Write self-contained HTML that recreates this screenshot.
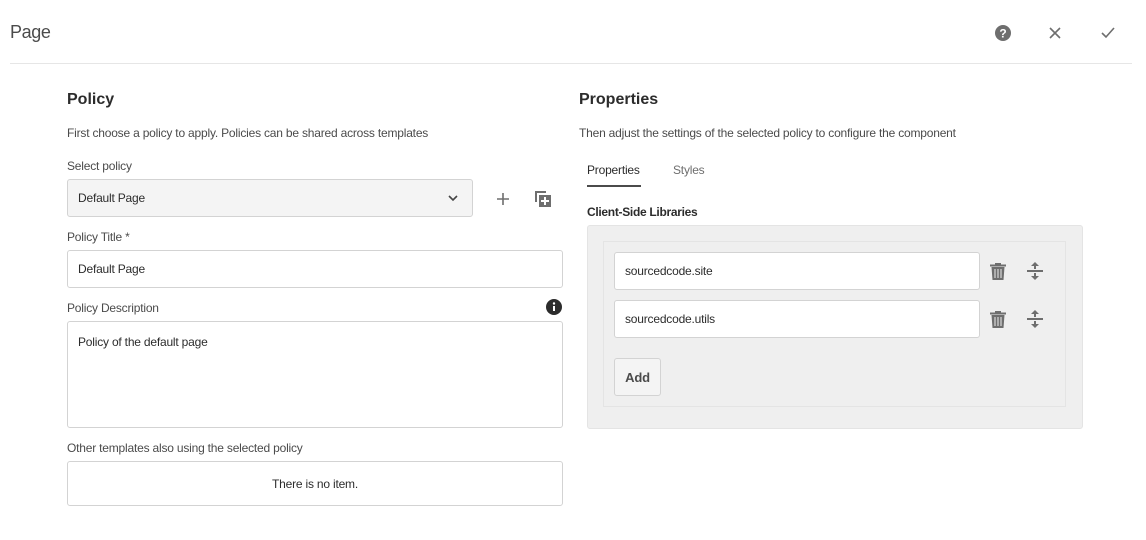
<!DOCTYPE html>
<html><head><style>
*{box-sizing:border-box;margin:0;padding:0}
body{width:1146px;height:540px;background:#fff;font-family:"Liberation Sans",sans-serif;color:#2c2c2c;position:relative;overflow:hidden}
.a{position:absolute}
.t{font-size:12px;color:#4b4b4b;letter-spacing:-0.2px}
.in{position:absolute;border:1px solid #d3d3d3;border-radius:3px;background:#fff;font-size:12px;color:#2c2c2c;padding-left:10px;display:flex;align-items:center;letter-spacing:-0.2px}
h2{font-size:16px;font-weight:bold;color:#2c2c2c;position:absolute}
</style></head><body>
<div class="a" style="left:10px;top:22px;font-size:18px;color:#4b4b4b;letter-spacing:-0.4px">Page</div>
<svg class="a" style="left:994px;top:24px" width="18" height="18" viewBox="0 0 18 18"><circle cx="9" cy="9" r="8" fill="#6e6e6e"/><text x="9" y="13.5" font-size="12" font-weight="bold" fill="#fff" text-anchor="middle" font-family="Liberation Sans">?</text></svg>
<svg class="a" style="left:1048px;top:26px" width="14" height="14"><path d="M2 2L12 12M12 2L2 12" stroke="#6e6e6e" stroke-width="1.6"/></svg>
<svg class="a" style="left:1100px;top:26px" width="16" height="14"><path d="M2 7L6 11L14 2" stroke="#6e6e6e" stroke-width="1.6" fill="none"/></svg>
<div class="a" style="left:10px;top:63px;width:1122px;height:1px;background:#e6e6e6"></div>

<h2 style="left:67px;top:91px">Policy</h2>
<div class="a t" style="left:67px;top:126px">First choose a policy to apply. Policies can be shared across templates</div>
<div class="a t" style="left:67px;top:159px">Select policy</div>
<div class="in" style="left:67px;top:179px;width:406px;height:38px;background:#f4f4f4">Default Page
<svg style="position:absolute;right:14px;top:15px" width="10" height="7"><path d="M1 1L5 5L9 1" stroke="#444" stroke-width="1.6" fill="none"/></svg></div>
<svg class="a" style="left:496px;top:192px" width="14" height="14"><path d="M7 1V13M1 7H13" stroke="#6e6e6e" stroke-width="1.6"/></svg>
<svg class="a" style="left:534px;top:190px" width="18" height="18"><path d="M1 1H12V3H3V12H1Z" fill="#6e6e6e"/><rect x="5" y="5" width="12" height="12" fill="#6e6e6e"/><path d="M11 7V15M7 11H15" stroke="#fff" stroke-width="2"/></svg>
<div class="a t" style="left:67px;top:230px">Policy Title *</div>
<div class="in" style="left:67px;top:250px;width:496px;height:38px">Default Page</div>
<div class="a t" style="left:67px;top:301px">Policy Description</div>
<svg class="a" style="left:546px;top:299px" width="16" height="16"><circle cx="8" cy="8" r="8" fill="#2c2c2c"/><rect x="7" y="7" width="2" height="5" fill="#fff"/><circle cx="8" cy="4.5" r="1.2" fill="#fff"/></svg>
<div class="in" style="left:67px;top:321px;width:496px;height:107px;align-items:flex-start;padding-top:13px">Policy of the default page</div>
<div class="a t" style="left:67px;top:441px">Other templates also using the selected policy</div>
<div class="in" style="left:67px;top:461px;width:496px;height:45px;justify-content:center;padding:0">There is no item.</div>

<h2 style="left:579px;top:91px">Properties</h2>
<div class="a t" style="left:579px;top:126px">Then adjust the settings of the selected policy to configure the component</div>
<div class="a" style="left:587px;top:163px;font-size:12px;color:#2c2c2c;letter-spacing:-0.2px">Properties</div>
<div class="a" style="left:587px;top:185px;width:54px;height:2px;background:#4b4b4b"></div>
<div class="a" style="left:673px;top:163px;font-size:12px;color:#6e6e6e;letter-spacing:-0.2px">Styles</div>
<div class="a" style="left:587px;top:205px;font-size:12px;font-weight:bold;letter-spacing:-0.3px">Client-Side Libraries</div>
<div class="a" style="left:587px;top:225px;width:496px;height:204px;background:#efefef;border:1px solid #e4e4e4;border-radius:3px"></div>
<div class="a" style="left:603px;top:241px;width:463px;height:166px;border:1px solid #e4e4e4"></div>
<div class="in" style="left:614px;top:252px;width:366px;height:38px">sourcedcode.site</div>
<div class="in" style="left:614px;top:300px;width:366px;height:38px">sourcedcode.utils</div>
<svg class="a" style="left:990px;top:263px" width="16" height="18"><rect x="0" y="1.5" width="16" height="2" fill="#6e6e6e"/><rect x="5" y="0" width="6" height="2" fill="#6e6e6e"/><path d="M1.5 4H14.5L13.5 17H2.5Z" fill="#6e6e6e"/><path d="M5 6V15M8 6V15M11 6V15" stroke="#efefef" stroke-width="1"/></svg>
<svg class="a" style="left:990px;top:311px" width="16" height="18"><rect x="0" y="1.5" width="16" height="2" fill="#6e6e6e"/><rect x="5" y="0" width="6" height="2" fill="#6e6e6e"/><path d="M1.5 4H14.5L13.5 17H2.5Z" fill="#6e6e6e"/><path d="M5 6V15M8 6V15M11 6V15" stroke="#efefef" stroke-width="1"/></svg>
<svg class="a" style="left:1027px;top:262px" width="16" height="18"><path d="M8 0L4 4H12Z M8 18L4 14H12Z" fill="#6e6e6e"/><rect x="7" y="3" width="2" height="4" fill="#6e6e6e"/><rect x="7" y="11" width="2" height="4" fill="#6e6e6e"/><rect x="0" y="8" width="16" height="2" fill="#6e6e6e"/></svg>
<svg class="a" style="left:1027px;top:310px" width="16" height="18"><path d="M8 0L4 4H12Z M8 18L4 14H12Z" fill="#6e6e6e"/><rect x="7" y="3" width="2" height="4" fill="#6e6e6e"/><rect x="7" y="11" width="2" height="4" fill="#6e6e6e"/><rect x="0" y="8" width="16" height="2" fill="#6e6e6e"/></svg>
<div class="in" style="left:614px;top:358px;width:47px;height:38px;background:#f4f4f4;justify-content:center;padding:0;font-weight:bold;color:#4b4b4b;font-size:13px">Add</div>
</body></html>
